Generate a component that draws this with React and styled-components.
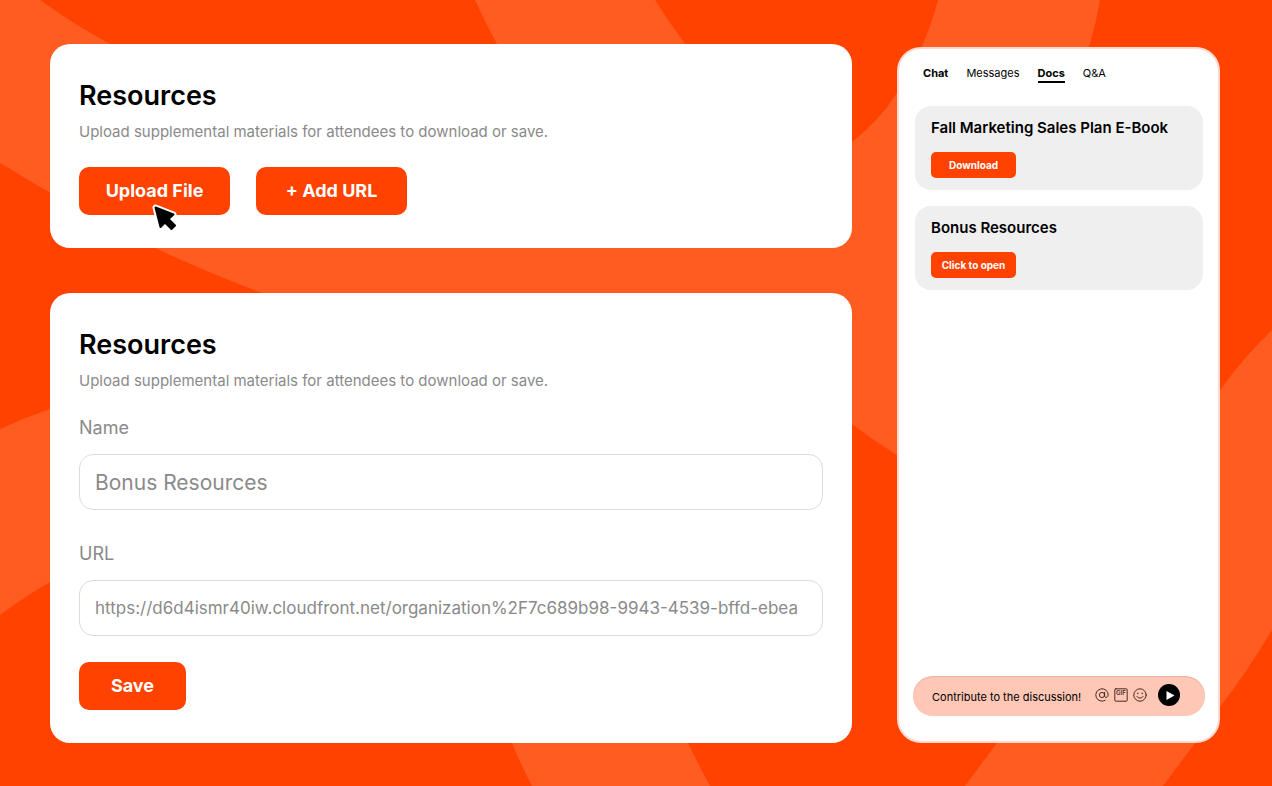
import React from 'react';
import styled, { createGlobalStyle } from 'styled-components';

const colors = {
  brand: '#ff4200',
  brandLight: '#ff5c22',
  light: '#ffffff',
  panel: '#efefef',
  blush: '#ffc7b5',
  blushBorder: '#ffd9cd',
  inputBorder: '#dcdcdc',
  text: '#000000',
  textMuted: '#8a8a8a',
};

const GlobalStyle = createGlobalStyle`
  *, *::before, *::after {
    box-sizing: border-box;
  }

  body {
    margin: 0;
    background-color: ${colors.brand};
    color: ${colors.text};
    font-family: Inter, "Liberation Sans", sans-serif;
  }

  button, input {
    font-family: inherit;
  }
`;

const Page = styled.main`
  position: relative;
  display: grid;
  grid-template-columns: minmax(0, 802fr) minmax(0, 323fr);
  gap: 45px;
  min-height: 100vh;
  padding: 44px 52px 43px 50px;
`;

const Backdrop = styled.svg`
  position: absolute;
  inset: 0;
  width: 100%;
  height: 100%;
`;

const Column = styled.div`
  position: relative;
  display: flex;
  flex-direction: column;
  gap: 45px;
`;

const Card = styled.section`
  padding: 33px 29px;
  border-radius: 20px;
  background-color: ${colors.light};
`;

const Title = styled.h2`
  margin: 0 0 6px;
  font-size: 27px;
  font-weight: 600;
  line-height: 37px;
`;

const Subtitle = styled.p`
  margin: 0 0 23px;
  font-size: 15px;
  line-height: 24px;
  color: ${colors.textMuted};
`;

const ButtonRow = styled.div`
  display: flex;
  gap: 26px;
`;

const ButtonHolder = styled.div`
  position: relative;
`;

const Button = styled.button`
  width: ${({ $width }) => $width}px;
  height: 48px;
  padding: 0 0 2px;
  border: 0;
  border-radius: 10px;
  background-color: ${colors.brand};
  color: ${colors.light};
  font-size: 18px;
  font-weight: 700;
  cursor: pointer;
`;

const Cursor = styled.svg`
  position: absolute;
  top: 36px;
  left: 72px;
  width: 28px;
  height: 28px;
  pointer-events: none;
`;

const Field = styled.div`
  display: flex;
  flex-direction: column;
  gap: 14px;
  margin-bottom: ${({ $last }) => ($last ? 26 : 32)}px;
`;

const Label = styled.label`
  font-size: 18px;
  line-height: 24px;
  color: ${colors.textMuted};
`;

const Input = styled.input`
  width: 100%;
  height: 56px;
  padding: 0 15px;
  border: 1px solid ${colors.inputBorder};
  border-radius: 14px;
  outline: none;
  background-color: ${colors.light};
  color: ${colors.textMuted};
  font-size: ${({ $large }) => ($large ? 21 : 17)}px;
`;

const Phone = styled.aside`
  position: relative;
  display: flex;
  flex-direction: column;
  margin-top: 3px;
  padding: 16px 13px 25px 14px;
  border: 2px solid ${colors.blushBorder};
  border-radius: 24px;
  background-color: ${colors.light};
`;

const Tabs = styled.nav`
  display: flex;
  gap: 18px;
  margin-bottom: 23px;
  padding-left: 10px;
`;

const Tab = styled.button`
  height: 18px;
  padding: 0;
  border: 0;
  border-bottom: 2px solid ${({ $active }) => ($active ? colors.text : 'transparent')};
  background: none;
  color: ${colors.text};
  font-size: 11px;
  font-weight: ${({ $bold }) => ($bold ? 700 : 400)};
  line-height: 16px;
  cursor: pointer;
`;

const DocList = styled.div`
  display: flex;
  flex-direction: column;
  gap: 16px;
  padding: 0 2px;
`;

const Doc = styled.article`
  padding: 12px 16px;
  border-radius: 16px;
  background-color: ${colors.panel};
`;

const DocTitle = styled.h3`
  margin: 0 0 14px;
  font-size: 15px;
  font-weight: 600;
  line-height: 20px;
`;

const DocButton = styled.button`
  display: block;
  width: 85px;
  height: 26px;
  padding: 0;
  border: 0;
  border-radius: 5px;
  background-color: ${colors.brand};
  color: ${colors.light};
  font-size: 10px;
  font-weight: 700;
  cursor: pointer;
`;

const Composer = styled.form`
  display: flex;
  align-items: center;
  height: 40px;
  margin-top: auto;
  padding: 0 25px 0 19px;
  border-radius: 20px;
  background-color: ${colors.blush};
  box-shadow: inset 0 1px 1px rgba(120, 40, 10, 0.15);
`;

const MessageInput = styled.input`
  flex: 1;
  min-width: 0;
  height: 24px;
  padding: 2px 0 0;
  border: 0;
  outline: none;
  background: none;
  color: ${colors.text};
  font-size: 11px;

  &::placeholder {
    color: ${colors.text};
    opacity: 1;
  }
`;

const IconGroup = styled.div`
  display: flex;
  gap: 3px;
  margin-right: 10px;
  padding-bottom: 2px;
`;

const IconButton = styled.button`
  display: flex;
  padding: 0;
  border: 0;
  background: none;
  cursor: pointer;
`;

const SendButton = styled(IconButton)`
  padding-bottom: 2px;
`;

const lineProps = {
  width: 16,
  height: 16,
  viewBox: '0 0 16 16',
  fill: 'none',
  stroke: '#4a2a20',
  strokeLinecap: 'round',
};

const AtIcon = () => (
  <svg {...lineProps}>
    <circle cx="8" cy="8" r="2.6" />
    <path d="M10.6 5.4V9c0 2.2 3.6 1.9 3.6-1a6.2 6.2 0 1 0-3 5.3" />
  </svg>
);

const GifIcon = () => (
  <svg {...lineProps}>
    <rect x="1.8" y="1.8" width="12.4" height="12.4" rx="1" />
    <text x="3" y="7.6" fontSize="6" fontWeight="600" fill="#4a2a20" stroke="none">
      GIF
    </text>
  </svg>
);

const SmileIcon = () => (
  <svg {...lineProps}>
    <circle cx="8" cy="8" r="6.2" />
    <path d="M5 9.6c1.4 2 4.6 2 6 0" />
    <path d="M5.8 6.2v.3M10.2 6.2v.3" strokeWidth="1.3" />
  </svg>
);

const SendIcon = () => (
  <svg width="22" height="22" viewBox="0 0 22 22">
    <circle cx="11" cy="11" r="11" fill={colors.text} />
    <path d="M8.500 7l8 4.600-8 4.400z" fill={colors.light} />
  </svg>
);

const Waves = () => (
  <Backdrop viewBox="0 0 1272 786" preserveAspectRatio="none" aria-hidden="true">
    <g fill={colors.brandLight}>
      <path d="M0 0H40Q75 25 110 44L700 200L852 142Q880 120 897 93Q926 47 938 0H1100Q1096 24 1089 47L1000 300L897 455Q874 441 852 424L400 340L262 293Q208 273 155 248Q78 211 0 163Z" />
      <path d="M475 0H655Q669 22 685 44L600 150L497 44Q485 22 475 0Z" />
      <path d="M0 429Q24 418 50 409L120 500L50 582Q24 597 0 615Z" />
      <path d="M512 743H688Q698 764 710 786H532Q521 765 512 743Z" />
      <path d="M1272 330Q1244 357 1220 390L1100 600L997 743L965 786H1163L1195 743L1220 707Q1247 672 1272 630Z" />
    </g>
  </Backdrop>
);

const CardHeader = () => (
  <>
    <Title>Resources</Title>
    <Subtitle>Upload supplemental materials for attendees to download or save.</Subtitle>
  </>
);

const cursorShape = 'M4.500 4.500L9.500 24L14 19.500L20.500 26L24 22.500L17.500 16L22.500 11.500Z';

const UploadCard = () => (
  <Card>
    <CardHeader />
    <ButtonRow>
      <ButtonHolder>
        <Button type="button" $width={151}>Upload File</Button>
        <Cursor viewBox="0 0 28 28" aria-hidden="true">
          <path
            d={cursorShape}
            fill={colors.light}
            stroke={colors.light}
            strokeWidth="6"
            strokeLinejoin="round"
          />
          <path
            d={cursorShape}
            fill={colors.text}
            stroke={colors.text}
            strokeWidth="2"
            strokeLinejoin="round"
          />
        </Cursor>
      </ButtonHolder>
      <Button type="button" $width={151}>+ Add URL</Button>
    </ButtonRow>
  </Card>
);

const UrlCard = () => (
  <Card>
    <CardHeader />
    <Field>
      <Label htmlFor="resource-name">Name</Label>
      <Input id="resource-name" type="text" defaultValue="Bonus Resources" $large />
    </Field>
    <Field $last>
      <Label htmlFor="resource-url">URL</Label>
      <Input
        id="resource-url"
        type="text"
        defaultValue="https://d6d4ismr40iw.cloudfront.net/organization%2F7c689b98-9943-4539-bffd-ebea"
      />
    </Field>
    <Button type="button" $width={107}>Save</Button>
  </Card>
);

const tabs = [
  { name: 'Chat', bold: true },
  { name: 'Messages' },
  { name: 'Docs', bold: true, active: true },
  { name: 'Q&A' },
];

const docs = [
  { title: 'Fall Marketing Sales Plan E-Book', action: 'Download' },
  { title: 'Bonus Resources', action: 'Click to open' },
];

const ChatPanel = () => (
  <Phone>
    <Tabs>
      {tabs.map(({ name, bold, active }) => (
        <Tab key={name} type="button" $bold={bold} $active={active}>
          {name}
        </Tab>
      ))}
    </Tabs>
    <DocList>
      {docs.map(({ title, action }) => (
        <Doc key={title}>
          <DocTitle>{title}</DocTitle>
          <DocButton type="button">{action}</DocButton>
        </Doc>
      ))}
    </DocList>
    <Composer onSubmit={event => event.preventDefault()}>
      <MessageInput aria-label="Message" placeholder="Contribute to the discussion!" />
      <IconGroup>
        <IconButton type="button" aria-label="Mention"><AtIcon /></IconButton>
        <IconButton type="button" aria-label="Add GIF"><GifIcon /></IconButton>
        <IconButton type="button" aria-label="Add emoji"><SmileIcon /></IconButton>
      </IconGroup>
      <SendButton type="submit" aria-label="Send"><SendIcon /></SendButton>
    </Composer>
  </Phone>
);

const App = () => (
  <>
    <GlobalStyle />
    <Page>
      <Waves />
      <Column>
        <UploadCard />
        <UrlCard />
      </Column>
      <ChatPanel />
    </Page>
  </>
);

export default App;
